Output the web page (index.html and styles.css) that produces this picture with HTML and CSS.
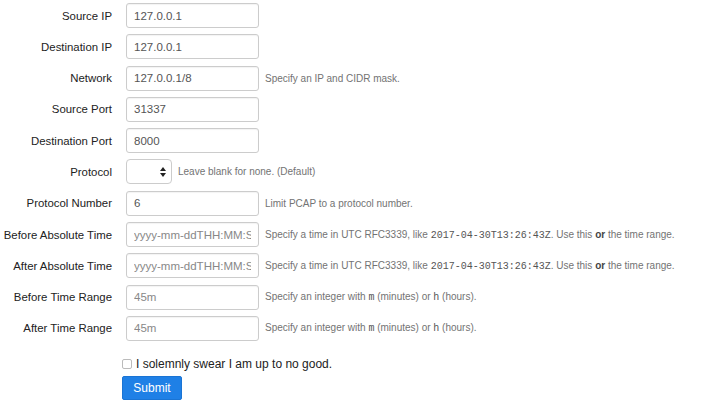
FILE: index.html
```html
<!DOCTYPE html>
<html>
<head>
<meta charset="utf-8">
<link rel="stylesheet" href="styles.css">
</head>
<body>
<form class="form">
  <div class="row"><label class="lbl">Source IP</label><input class="inp" value="127.0.0.1"></div>
  <div class="row"><label class="lbl">Destination IP</label><input class="inp" value="127.0.0.1"></div>
  <div class="row"><label class="lbl">Network</label><input class="inp" value="127.0.0.1/8"><span class="help">Specify an IP and CIDR mask.</span></div>
  <div class="row"><label class="lbl">Source Port</label><input class="inp" value="31337"></div>
  <div class="row"><label class="lbl">Destination Port</label><input class="inp" value="8000"></div>
  <div class="row"><label class="lbl">Protocol</label><span class="sel"><span class="arrows"><svg width="6" height="10" viewBox="0 0 6 10"><path d="M3 0 L6 4 L0 4 Z M3 10 L6 6 L0 6 Z" fill="#222"/></svg></span></span><span class="help">Leave blank for none. (Default)</span></div>
  <div class="row"><label class="lbl">Protocol Number</label><input class="inp" value="6"><span class="help">Limit PCAP to a protocol number.</span></div>
  <div class="row"><label class="lbl">Before Absolute Time</label><input class="inp" placeholder="yyyy-mm-ddTHH:MM:SSZ"><span class="help">Specify a time in UTC RFC3339, like <code>2017-04-30T13:26:43Z</code>. Use this <b>or</b> the time range.</span></div>
  <div class="row"><label class="lbl">After Absolute Time</label><input class="inp" placeholder="yyyy-mm-ddTHH:MM:SSZ"><span class="help">Specify a time in UTC RFC3339, like <code>2017-04-30T13:26:43Z</code>. Use this <b>or</b> the time range.</span></div>
  <div class="row"><label class="lbl">Before Time Range</label><input class="inp" placeholder="45m"><span class="help">Specify an integer with <code>m</code> (minutes) or <code>h</code> (hours).</span></div>
  <div class="row"><label class="lbl">After Time Range</label><input class="inp" placeholder="45m"><span class="help">Specify an integer with <code>m</code> (minutes) or <code>h</code> (hours).</span></div>
  <div class="check"><span class="box"></span><span class="check-text">I solemnly swear I am up to no good.</span></div>
  <div class="actions"><button type="button" class="btn">Submit</button></div>
</form>
</body>
</html>
```
FILE: styles.css
```css
html, body {
  margin: 0;
  padding: 0;
  background: #fff;
  font-family: "Liberation Sans", Arial, sans-serif;
}
.form {
  padding-top: 3px;
}
.row {
  display: flex;
  align-items: center;
  height: 25px;
  margin-bottom: 6.3px;
}
.lbl {
  width: 112px;
  text-align: right;
  font-size: 11.4px;
  color: #222;
  margin-right: 14px;
  flex: none;
  white-space: nowrap;
}
.inp {
  box-sizing: border-box;
  width: 133px;
  height: 25px;
  border: 1px solid #ccc;
  border-radius: 3px;
  padding: 0 7px;
  font-family: "Liberation Sans", Arial, sans-serif;
  font-size: 11.5px;
  color: #555;
  margin: 0;
  flex: none;
  box-shadow: inset 0 1px 1px rgba(0,0,0,0.05);
}
.inp::placeholder {
  color: #888;
  opacity: 1;
}
.sel {
  box-sizing: border-box;
  width: 46px;
  height: 25px;
  border: 1px solid #ccc;
  border-radius: 4px;
  display: flex;
  align-items: center;
  justify-content: flex-end;
  padding-right: 5px;
  flex: none;
  margin-right: -1px;
}
.arrows {
  display: flex;
}
.help {
  font-size: 10px;
  color: #737373;
  margin-left: 6px;
  white-space: nowrap;
}
.sel + .help {
  margin-left: 7px;
}
.help code {
  font-family: "Liberation Mono", "Courier New", monospace;
  font-size: 10px;
  color: #555;
}
.help b {
  color: #444;
}
.check {
  display: flex;
  align-items: center;
  margin: 16px 0 0 122px;
  height: 14px;
}
.box {
  box-sizing: border-box;
  width: 10px;
  height: 10px;
  border: 1px solid #bbb;
  border-radius: 2px;
  margin-right: 4px;
}
.check-text {
  font-size: 12px;
  color: #222;
}
.actions {
  margin: 5px 0 0 122px;
}
.btn {
  box-sizing: border-box;
  width: 60px;
  height: 24px;
  background: #1f80e6;
  border: 1px solid #1a74d4;
  border-radius: 2px;
  color: #fff;
  font-family: "Liberation Sans", Arial, sans-serif;
  font-size: 12px;
  padding: 0;
}
```
